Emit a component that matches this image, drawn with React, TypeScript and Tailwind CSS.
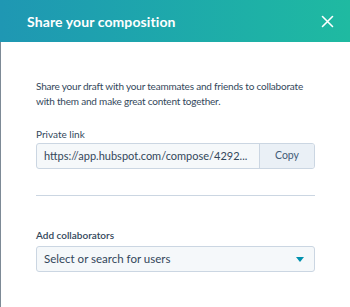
import React from 'react'

export default function App() {
  return (
    <div className="w-[350px] h-[307px] bg-white overflow-hidden" style={{ fontFamily: 'Lato, "Open Sans", sans-serif' }}>
      <div className="h-[42px] flex items-center justify-between pl-[27px] pr-[16px] bg-gradient-to-r from-[#1f97b3] to-[#1fbaa1]">
        <h1 className="text-white font-bold text-[14px] tracking-[0.1px]">Share your composition</h1>
        <button className="text-white" title="Close">
          <svg width="13" height="13" viewBox="0 0 13 13" fill="none" stroke="currentColor" strokeWidth="1.6" strokeLinecap="round">
            <path d="M1.5 1.5 L11.5 11.5 M11.5 1.5 L1.5 11.5" />
          </svg>
        </button>
      </div>
      <div className="h-[265px] border-l border-[#7d8a96] pl-[35px] pr-[35px] pt-[37px] text-[#33475b]">
        <p className="max-w-[268px] text-[10px] leading-[15px] tracking-[-0.2px]">
          Share your draft with your teammates and friends to collaborate with them and make great content together.
        </p>
        <div className="mt-[18px] text-[10px] leading-[14px]">Private link</div>
        <div className="mt-[2px] flex h-[26px] border border-[#cbd6e2] rounded-[3px] bg-[#f5f8fa] overflow-hidden">
          <div className="flex-1 flex items-center pl-[7px] text-[11px] truncate">https://app.hubspot.com/compose/4292...</div>
          <button className="w-[55px] border-l border-[#cbd6e2] bg-[#eaf0f6] text-[10.5px] text-[#425b76]">Copy</button>
        </div>
        <div className="mt-[26px] h-px bg-[#cbd6e2]" />
        <div className="mt-[32px] text-[10px] leading-[14px] font-semibold">Add collaborators</div>
        <div className="mt-[4px] h-[26px] flex items-center justify-between border border-[#cbd6e2] rounded-[3px] bg-[#f5f8fa] pl-[7px] pr-[10px]">
          <span className="text-[11.5px]">Select or search for users</span>
          <svg width="8" height="5" viewBox="0 0 8 5">
            <path d="M0 0 L8 0 L4 5 Z" fill="#0091ae" />
          </svg>
        </div>
      </div>
    </div>
  )
}
